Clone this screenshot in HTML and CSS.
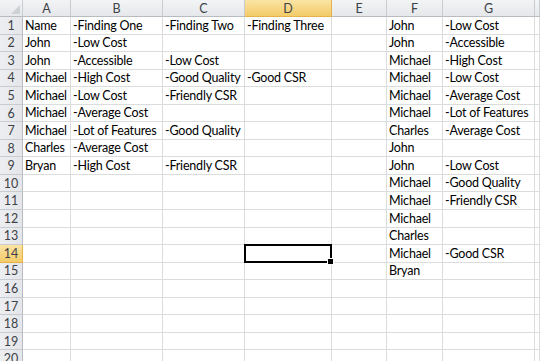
FILE: index.html
```html
<!DOCTYPE html>
<html lang="en">
<head>
    <meta charset="UTF-8">
    <meta name="viewport" content="width=device-width, initial-scale=1.0">
    <title>Findings</title>
    <link rel="stylesheet" href="styles.css">
</head>
<body>
    <div class="sheet">
        <div class="row head">
            <div class="corner"><span class="tri"></span></div>
            <div>A</div><div>B</div><div>C</div><div class="on">D</div><div>E</div><div>F</div><div>G</div><div></div>
        </div>

        <div class="row"><div class="num">1</div><div>Name</div><div>-Finding One</div><div>-Finding Two</div><div>-Finding Three</div><div></div><div>John</div><div>-Low Cost</div><div></div></div>
        <div class="row"><div class="num">2</div><div>John</div><div>-Low Cost</div><div></div><div></div><div></div><div>John</div><div>-Accessible</div><div></div></div>
        <div class="row"><div class="num">3</div><div>John</div><div>-Accessible</div><div>-Low Cost</div><div></div><div></div><div>Michael</div><div>-High Cost</div><div></div></div>
        <div class="row"><div class="num">4</div><div>Michael</div><div>-High Cost</div><div>-Good Quality</div><div>-Good CSR</div><div></div><div>Michael</div><div>-Low Cost</div><div></div></div>
        <div class="row"><div class="num">5</div><div>Michael</div><div>-Low Cost</div><div>-Friendly CSR</div><div></div><div></div><div>Michael</div><div>-Average Cost</div><div></div></div>
        <div class="row"><div class="num">6</div><div>Michael</div><div>-Average Cost</div><div></div><div></div><div></div><div>Michael</div><div>-Lot of Features</div><div></div></div>
        <div class="row"><div class="num">7</div><div>Michael</div><div>-Lot of Features</div><div>-Good Quality</div><div></div><div></div><div>Charles</div><div>-Average Cost</div><div></div></div>
        <div class="row"><div class="num">8</div><div>Charles</div><div>-Average Cost</div><div></div><div></div><div></div><div>John</div><div></div><div></div></div>
        <div class="row"><div class="num">9</div><div>Bryan</div><div>-High Cost</div><div>-Friendly CSR</div><div></div><div></div><div>John</div><div>-Low Cost</div><div></div></div>
        <div class="row"><div class="num">10</div><div></div><div></div><div></div><div></div><div></div><div>Michael</div><div>-Good Quality</div><div></div></div>
        <div class="row"><div class="num">11</div><div></div><div></div><div></div><div></div><div></div><div>Michael</div><div>-Friendly CSR</div><div></div></div>
        <div class="row"><div class="num">12</div><div></div><div></div><div></div><div></div><div></div><div>Michael</div><div></div><div></div></div>
        <div class="row"><div class="num">13</div><div></div><div></div><div></div><div></div><div></div><div>Charles</div><div></div><div></div></div>
        <div class="row"><div class="num on">14</div><div></div><div></div><div></div><div class="active"></div><div></div><div>Michael</div><div>-Good CSR</div><div></div></div>
        <div class="row"><div class="num">15</div><div></div><div></div><div></div><div></div><div></div><div>Bryan</div><div></div><div></div></div>
        <div class="row"><div class="num">16</div><div></div><div></div><div></div><div></div><div></div><div></div><div></div><div></div></div>
        <div class="row"><div class="num">17</div><div></div><div></div><div></div><div></div><div></div><div></div><div></div><div></div></div>
        <div class="row"><div class="num">18</div><div></div><div></div><div></div><div></div><div></div><div></div><div></div><div></div></div>
        <div class="row"><div class="num">19</div><div></div><div></div><div></div><div></div><div></div><div></div><div></div><div></div></div>
        <div class="row"><div class="num">20</div><div></div><div></div><div></div><div></div><div></div><div></div><div></div><div></div></div>
    </div>
</body>
</html>
```

FILE: styles.css
```css
*{
    margin: 0;
    padding: 0;
    box-sizing: border-box;
}

body{
    width: 540px;
    height: 361px;
    overflow: hidden;
    background-color: #fff;
    font-family: Lato, "Liberation Sans", sans-serif;
    font-size: 12.5px;
    letter-spacing: -0.2px;
    color: #000;
}

.row{
    display: grid;
    grid-template-columns: 23px 48px 92px 82px 87px 55px 56px 92px 1fr;
    height: 17.55px;
}

.row > div{
    border-right: 1px solid #dadcdd;
    border-bottom: 1px solid #dadcdd;
    padding: 0 2px 1px;
    display: flex;
    align-items: flex-end;
    white-space: nowrap;
    line-height: 15px;
}

/* column letters */
.head{
    height: 17px;
}

.head > div{
    background: linear-gradient(#f3f4f6, #e5e7ea);
    border-right: 1px solid #c8cbcf;
    border-bottom: 1px solid #b8bcc1;
    justify-content: center;
    align-items: center;
    color: #3d4248;
    padding: 0;
    letter-spacing: 0;
}

.head > .on,
.row > .num.on{
    background: linear-gradient(#fae3a4, #f3cb69);
    border-color: #e6b24a;
}

.corner{
    position: relative;
}

.tri{
    position: absolute;
    right: 2px;
    bottom: 2px;
    width: 0;
    height: 0;
    border-left: 9px solid transparent;
    border-bottom: 9px solid #cdd1d5;
}

/* row numbers */
.row > .num{
    background: linear-gradient(90deg, #eceef1, #e4e6e9);
    border-right: 1px solid #b8bcc1;
    border-bottom: 1px solid #c8cbcf;
    justify-content: center;
    align-items: center;
    color: #3d4248;
    padding: 0;
    letter-spacing: 0;
}

.active{
    position: relative;
}

.active::after{
    content: "";
    position: absolute;
    top: -1px;
    left: -1px;
    right: -1px;
    bottom: -1px;
    border: 2px solid #000;
}

.active::before{
    content: "";
    position: absolute;
    right: -3px;
    bottom: -3px;
    width: 5px;
    height: 5px;
    background-color: #000;
    border: 1px solid #fff;
    z-index: 1;
}
```
